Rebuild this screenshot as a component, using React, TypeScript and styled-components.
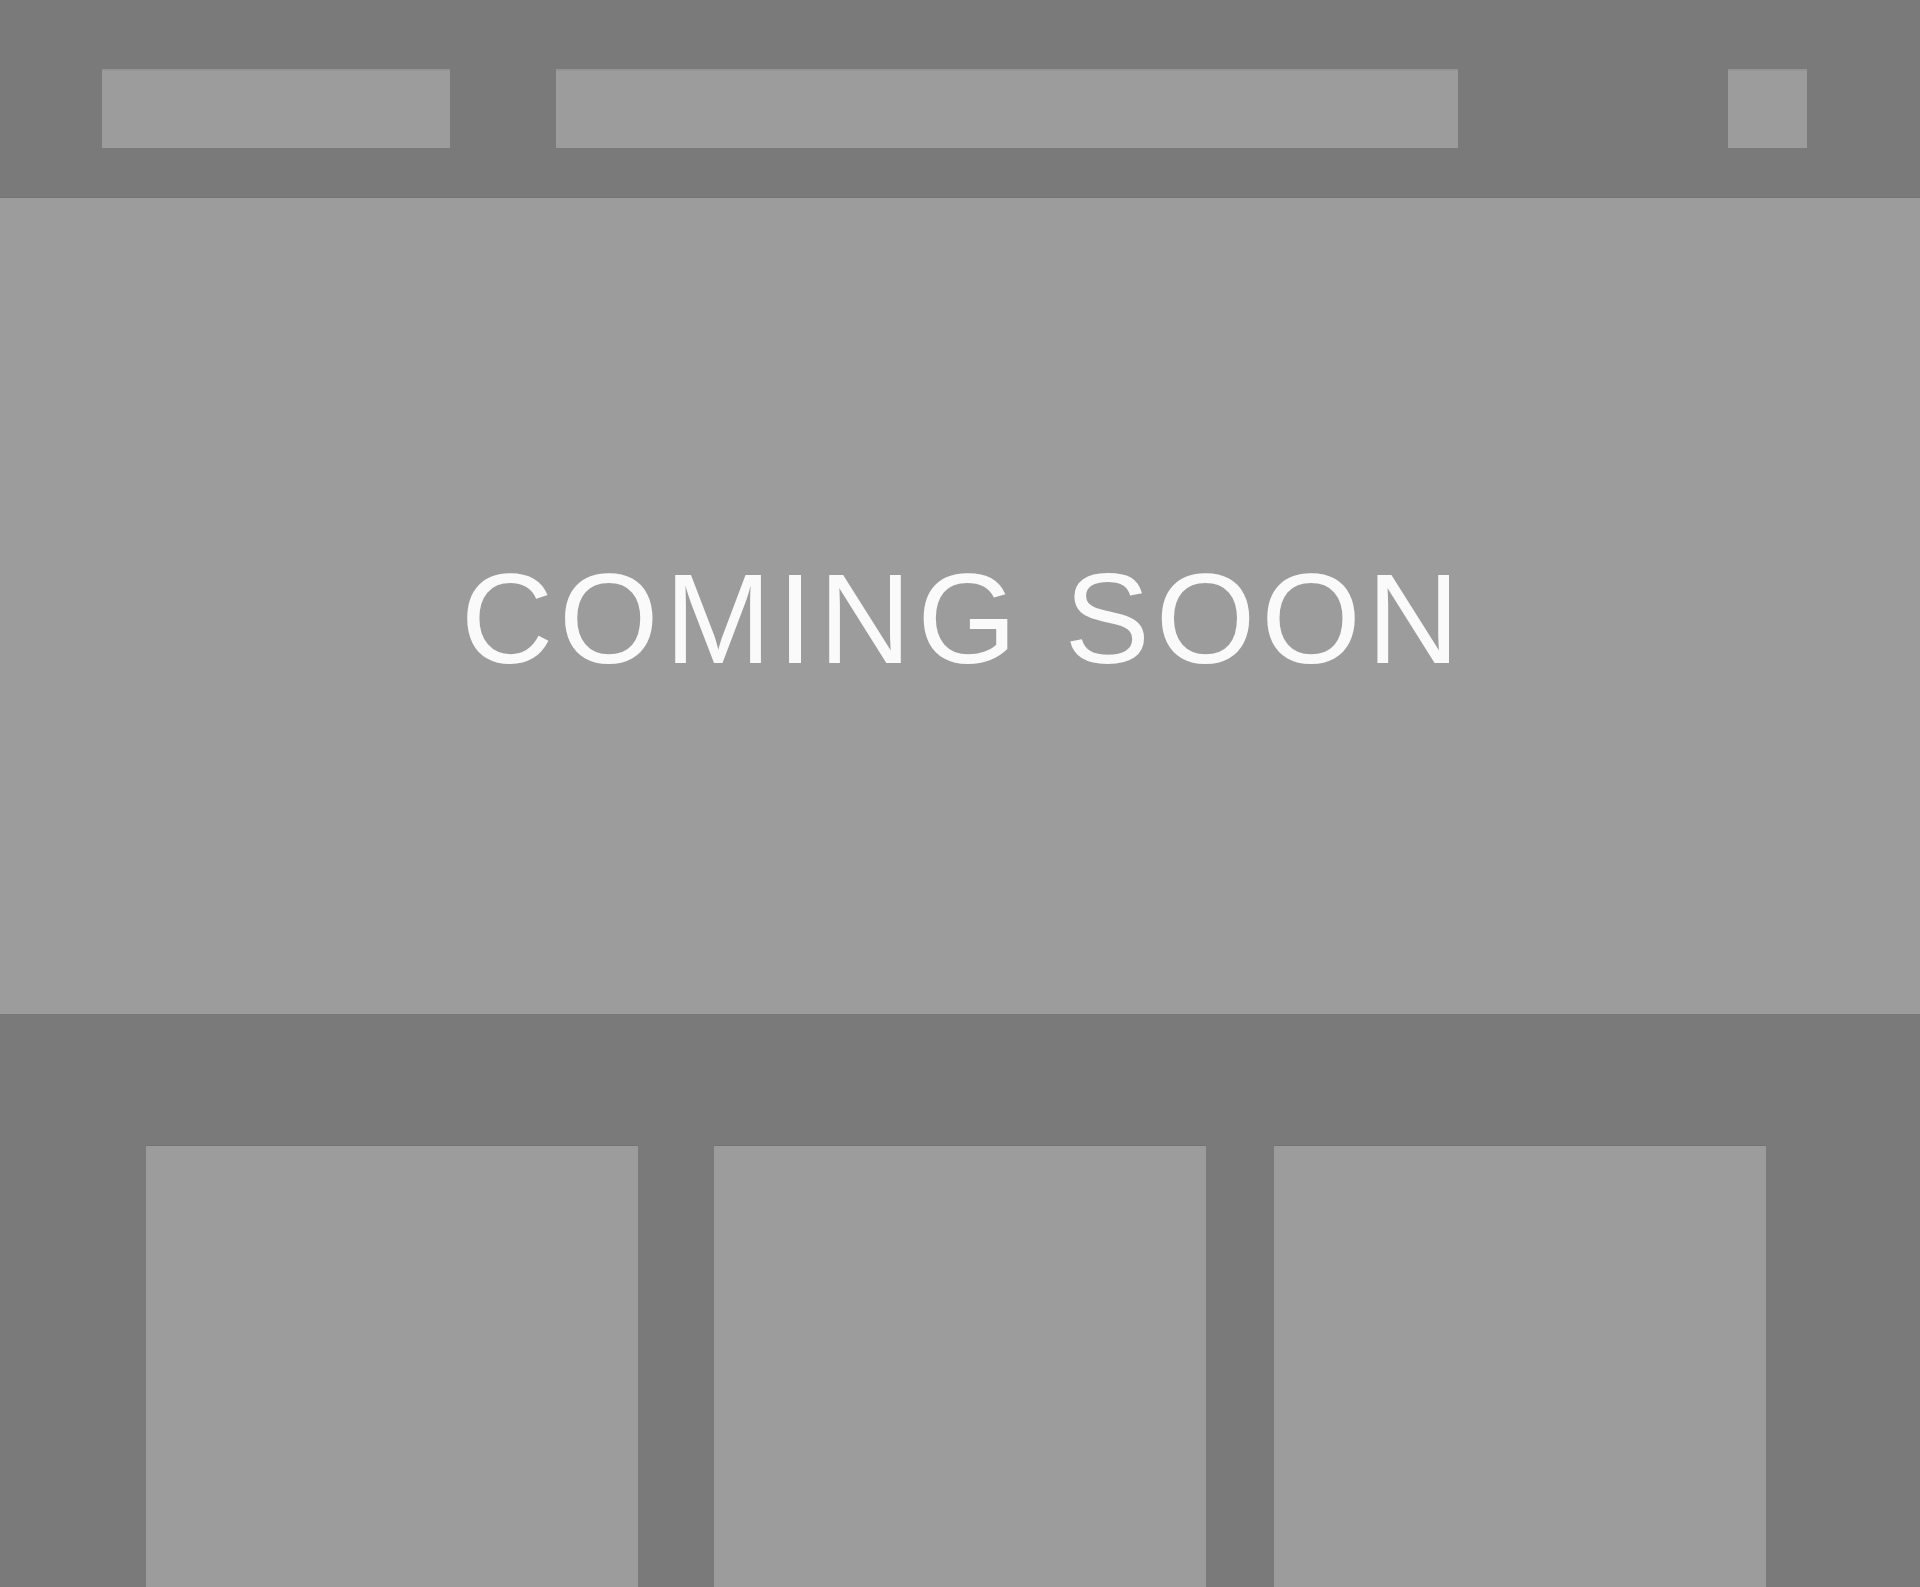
import styled, { createGlobalStyle } from 'styled-components'

const GlobalStyle = createGlobalStyle`
  html, body {
    margin: 0;
    padding: 0;
    background-color: #7a7a7a;
    font-family: 'Liberation Sans', Arial, sans-serif;
    overflow: hidden;
  }
`

const Page = styled.div`
  width: 1920px;
  height: 1587px;
  display: flex;
  flex-direction: column;
  background-color: #7a7a7a;
  overflow: hidden;
`

const Header = styled.header`
  height: 198px;
  flex-shrink: 0;
  display: flex;
  align-items: flex-start;
  padding: 69px 113px 0 102px;
  box-sizing: border-box;
  border-bottom: 1px solid #747474;
`

const Placeholder = styled.div<{ $width: number; $push?: boolean }>`
  width: ${(p) => p.$width}px;
  height: 79px;
  background-color: #9c9c9c;
  border-top: 2px solid #959595;
  box-sizing: border-box;
  margin-left: ${(p) => (p.$push ? 'auto' : '0')};
`

const Logo = styled(Placeholder)`
  margin-right: 106px;
`

const Hero = styled.section`
  height: 816px;
  flex-shrink: 0;
  background-color: #9c9c9c;
  display: flex;
  align-items: center;
  justify-content: center;
`

const Title = styled.h1`
  margin: 0;
  padding: 26px 0 0 6px;
  color: #fafafa;
  font-family: 'Liberation Sans', Arial, sans-serif;
  font-weight: 400;
  font-size: 128px;
  letter-spacing: 6px;
  line-height: 1;
`

const Features = styled.section`
  flex: 1;
  display: flex;
  align-items: flex-start;
  padding: 132px 0 0 146px;
`

const Card = styled.div<{ $offset?: number }>`
  width: 492px;
  height: 460px;
  flex-shrink: 0;
  margin-left: ${(p) => p.$offset ?? 0}px;
  background-color: #9c9c9c;
  box-shadow: 0 -1px 0 #737373;
`

export default function App() {
  return (
    <>
      <GlobalStyle />
      <Page>
        <Header>
          <Logo $width={348} />
          <Placeholder $width={902} />
          <Placeholder $width={79} $push />
        </Header>
        <Hero>
          <Title>COMING SOON</Title>
        </Hero>
        <Features>
          <Card />
          <Card $offset={76} />
          <Card $offset={68} />
        </Features>
      </Page>
    </>
  )
}
